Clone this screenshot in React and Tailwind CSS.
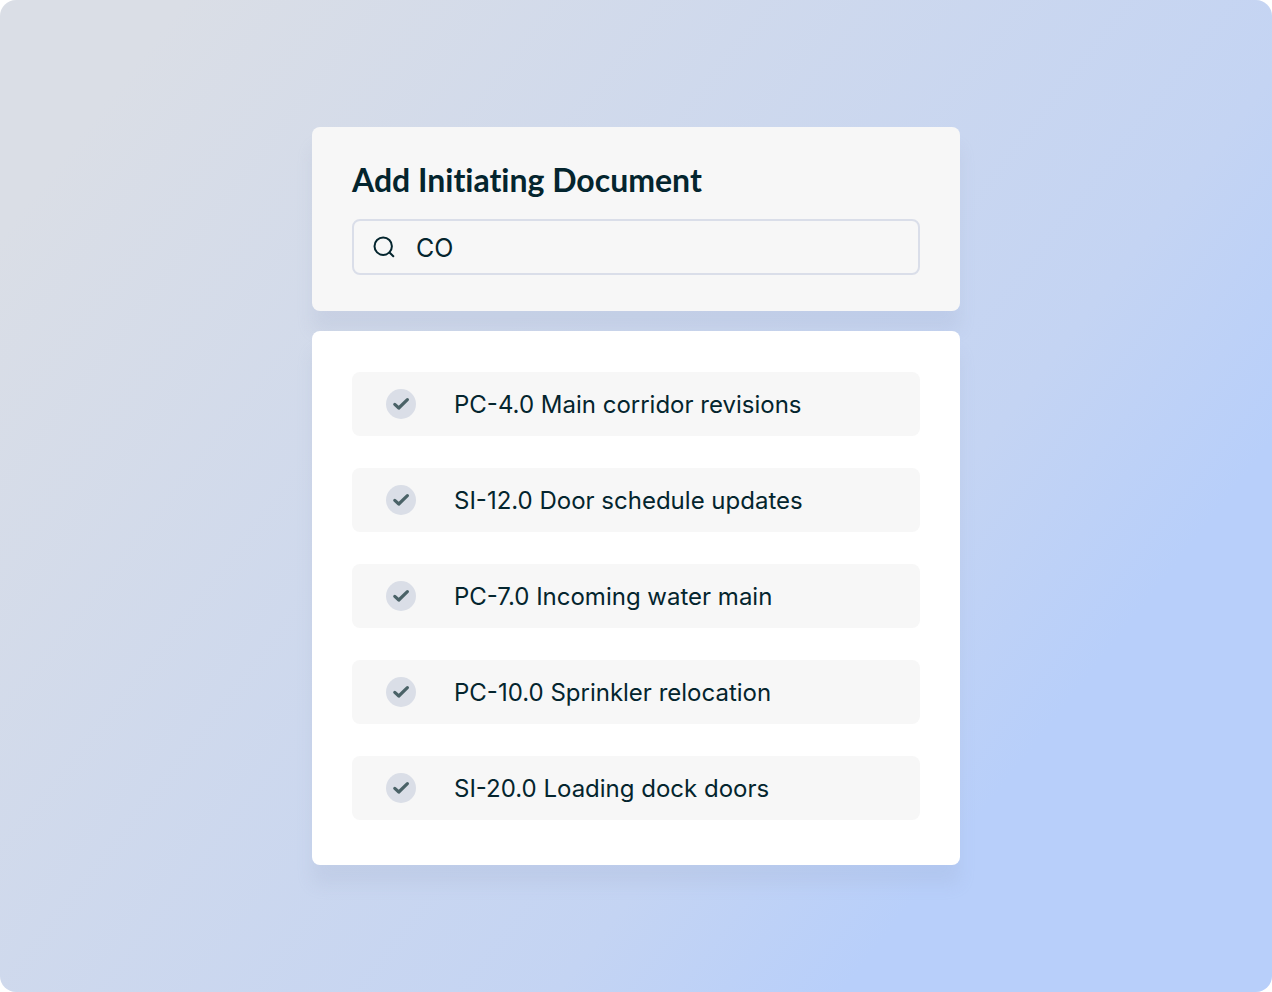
const documents = [
  'PC-4.0 Main corridor revisions',
  'SI-12.0 Door schedule updates',
  'PC-7.0 Incoming water main',
  'PC-10.0 Sprinkler relocation',
  'SI-20.0 Loading dock doors',
];

function SearchIcon() {
  return (
    <svg className="size-6 shrink-0" viewBox="0 0 24 24" fill="none" stroke="currentColor" strokeWidth="2" strokeLinecap="round" aria-hidden="true">
      <circle cx="11.2" cy="11.2" r="8.7" />
      <path d="M17.5 17.5 L21.3 21.3" />
    </svg>
  );
}

function CheckIcon() {
  return (
    <svg className="size-[30px] shrink-0" viewBox="0 0 30 30" fill="none" aria-hidden="true">
      <circle cx="15" cy="15" r="15" fill="#dadee7" />
      <path d="M8.8 15.4 L12.8 19 L21.4 10.7" stroke="#4a6267" strokeWidth="3.2" strokeLinecap="round" strokeLinejoin="round" />
    </svg>
  );
}

export default function App() {
  return (
    <div className="bg-white">
      <main className="flex min-h-screen flex-col items-center justify-center gap-5 rounded-2xl bg-[linear-gradient(128deg,#dadee6_9%,#c4d4f3_65%,#b8cffa_79%)] font-['Inter',sans-serif] text-[#04252e]">
        <section className="w-full max-w-[648px] rounded-lg bg-[#f7f7f7] px-10 pt-[33px] pb-9 shadow-[0_20px_16px_0_rgba(150,160,190,0.16)]">
          <h1 className="mb-[19px] font-['Lato',sans-serif] text-[32px] leading-10 font-bold [font-variant-ligatures:none]">
            <label htmlFor="document-search">Add Initiating Document</label>
          </h1>
          <div className="flex h-14 items-center gap-5 rounded-lg border-2 border-[#dadee9] px-[18px]">
            <SearchIcon />
            <input
              id="document-search"
              type="text"
              defaultValue="CO"
              className="min-w-0 flex-1 bg-transparent pt-0.5 text-[25px] leading-8 outline-none"
            />
          </div>
        </section>
        <section className="w-full max-w-[648px] rounded-lg bg-white px-10 pt-[41px] pb-[45px] shadow-[0_20px_16px_0_rgba(150,160,190,0.16)]">
          <ul className="flex flex-col gap-8">
            {documents.map((name) => (
              <li key={name}>
                <button type="button" className="flex h-16 w-full items-center gap-[38px] rounded-lg bg-[#f7f7f7] px-[34px] text-left text-2xl">
                  <CheckIcon />
                  <span className="pt-0.5">{name}</span>
                </button>
              </li>
            ))}
          </ul>
        </section>
      </main>
    </div>
  );
}
